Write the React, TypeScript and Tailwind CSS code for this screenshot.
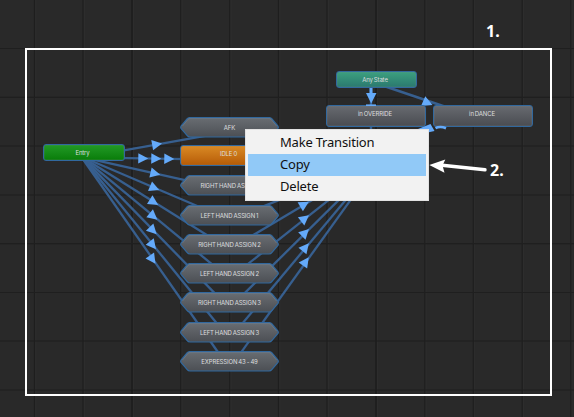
type Point = [number, number];

type GraphNode = {
  label: string;
  place: string;
  kind: 'entry' | 'any' | 'active' | 'state';
};

type Machine = { label: string; place: string; y: number };

const ENTRY: Point = [84, 153];
const EXIT: Point = [376, 157];
const HUB_X = 229.5;

const machines: Machine[] = [
  { label: 'AFK', place: 'top-[117px]', y: 127 },
  { label: 'RIGHT HAND ASSIGN', place: 'top-[175px]', y: 185.5 },
  { label: 'LEFT HAND ASSIGN 1', place: 'top-[205px]', y: 215 },
  { label: 'RIGHT HAND ASSIGN 2', place: 'top-[234px]', y: 244 },
  { label: 'LEFT HAND ASSIGN 2', place: 'top-[263px]', y: 273 },
  { label: 'RIGHT HAND ASSIGN 3', place: 'top-[292px]', y: 302 },
  { label: 'LEFT HAND ASSIGN 3', place: 'top-[322px]', y: 332 },
  { label: 'EXPRESSION 43 - 49', place: 'top-[351px]', y: 361 },
];

const states: GraphNode[] = [
  { label: 'Entry', place: 'left-[43px] top-[144px] w-[82px] h-[17px] pr-[3px]', kind: 'entry' },
  { label: 'IDLE 0', place: 'left-[180px] top-[145px] w-[99px] h-[21px] pr-[2px]', kind: 'active' },
  { label: 'Any State', place: 'left-[336px] top-[71px] w-[81px] h-[17px] pr-[3px]', kind: 'any' },
  { label: 'in OVERRIDE', place: 'left-[326px] top-[105px] w-[100px] h-[22px] pr-[2px]', kind: 'state' },
  { label: 'in DANCE', place: 'left-[433px] top-[105px] w-[100px] h-[22px] pr-[2px]', kind: 'state' },
];

const fills = {
  entry: 'from-[#219a25] to-[#087d08]',
  any: 'from-[#3ca07f] to-[#2b796f]',
  active: 'from-[#d98a24] to-[#b65b05]',
  state: 'from-[#676a70] to-[#4a4c51]',
};

const columns = [34.5, 83, 132, 180.7, 229.7, 278.5, 327, 376, 424.8, 473.3, 522.2, 570.8];
const rows = [48.5, 97.3, 146, 195, 243.7, 292.5, 341, 390];

/** A transition line, shifted sideways so opposite directions do not overlap. */
function Edge({ from, to, arrows = [0] }: { from: Point; to: Point; arrows?: number[] }) {
  const dx = to[0] - from[0];
  const dy = to[1] - from[1];
  const len = Math.hypot(dx, dy);
  const ox = (-dy / len) * 4.4;
  const oy = (dx / len) * 4.4;
  const angle = (Math.atan2(dy, dx) * 180) / Math.PI;
  const cx = (from[0] + to[0]) / 2 + ox - 0.6;
  const cy = (from[1] + to[1]) / 2 + oy;
  return (
    <g>
      <line
        x1={from[0] + ox}
        y1={from[1] + oy}
        x2={to[0] + ox}
        y2={to[1] + oy}
        stroke="#375f8f"
        strokeWidth="2.3"
      />
      {arrows.map((a) => (
        <path
          key={a}
          d="M-4.8 -5.2 L5.2 0 L-4.8 5.2 Z"
          fill="#64aafa"
          transform={`translate(${cx + (dx / len) * a} ${cy + (dy / len) * a}) rotate(${angle})`}
        />
      ))}
    </g>
  );
}

function Grid() {
  return (
    <g>
      {columns.map((x, i) => (
        <g key={x}>
          <line x1={x} y1="0" x2={x} y2="417" stroke="#1e1e1e" strokeWidth={i % 5 === 2 ? 1.8 : 1.1} />
          <line x1={x + 1.4} y1="0" x2={x + 1.4} y2="417" stroke="#2e2e2e" strokeWidth="1" />
        </g>
      ))}
      {rows.map((y) => (
        <line key={y} x1="0" y1={y} x2="574" y2={y} stroke="#1f1f1f" strokeWidth="1.2" />
      ))}
    </g>
  );
}

function Label({ text }: { text: string }) {
  return (
    <span className="relative whitespace-nowrap text-[6px] leading-[8px] tracking-[-0.14px] text-[#dcdddf] [word-spacing:-0.5px]">
      {text}
    </span>
  );
}

function MachineNode({ label, place }: Machine) {
  return (
    <div className={`absolute left-[180px] flex h-[21px] w-[99px] items-center justify-center ${place}`}>
      <svg className="absolute inset-0" width="99" height="21" viewBox="0 0 99 21">
        <path
          d="M9.5 .7H89.5Q91 .8 92 2L98 9.2Q98.7 10.3 98 11.4L92 18.4Q90.8 20 89 20H10Q8.2 20 7 18.4L1 11.4Q.3 10.3 1 9.2L7 2Q8 .8 9.5 .7Z"
          fill="url(#steel)"
          stroke="#31689e"
          strokeWidth="1.2"
        />
        <path d="M2.5 9L8 2.4Q8.6 1.7 10 1.6H89Q90.4 1.7 91 2.4L96.5 9" fill="none" stroke="#75808b" strokeWidth=".6" />
      </svg>
      <Label text={label} />
    </div>
  );
}

function StateNode({ label, place, kind }: GraphNode) {
  const big = kind === 'active' || kind === 'state';
  return (
    <div
      className={`absolute flex justify-center rounded-[3px] border border-[#31689e] bg-linear-to-b shadow-[inset_0_0_0_0.5px_#7c858e55] ${fills[kind]} ${place} ${big ? 'items-start pt-[3.5px]' : 'items-center'}`}
    >
      <Label text={label} />
    </div>
  );
}

function ContextMenu() {
  return (
    <div className="absolute left-[245px] top-[129px] flex h-[72px] w-[184px] flex-col border border-[#e2e2e2] bg-[#f2f2f2] px-[2px] pt-[2px] font-['Noto_Sans','Open_Sans',sans-serif] text-[13px] text-[#101010]">
      {['Make Transition', 'Copy', 'Delete'].map((item) => (
        <div
          key={item}
          className={`flex h-[22px] shrink-0 items-center pl-[32px] tracking-[-0.2px] ${item === 'Copy' ? 'bg-[#91c9f7]' : ''}`}
        >
          {item}
        </div>
      ))}
    </div>
  );
}

export default function App() {
  return (
    <main className="relative h-[417px] w-[574px] overflow-hidden bg-[#292929] font-[Inter,sans-serif]">
      <svg className="absolute inset-0" width="574" height="417" viewBox="0 0 574 417">
        <defs>
          <linearGradient id="steel" x1="0" y1="0" x2="0" y2="1">
            <stop offset="0" stopColor="#696d72" />
            <stop offset="1" stopColor="#4c4f54" />
          </linearGradient>
        </defs>
        <Grid />
        {machines.map((m, i) => (
          <g key={m.label}>
            <Edge from={ENTRY} to={[HUB_X, m.y]} />
            {i > 0 && <Edge from={[HUB_X, m.y]} to={EXIT} />}
          </g>
        ))}
        <Edge from={ENTRY} to={[HUB_X, 155.5]} arrows={[-13, 0, 13]} />
        <path d="M371 86V140M384 86L446 107" stroke="#375f8f" strokeWidth="2.4" />
        <path d="M371 88V93" stroke="#64aafa" strokeWidth="3" />
        <path d="M366 93H376.5L371.2 103.5ZM425.3 96.3L432.5 105L421 106Z" fill="#64aafa" />
      </svg>

      {machines.map((m) => (
        <MachineNode key={m.label} {...m} />
      ))}
      {states.map((s) => (
        <StateNode key={s.label} {...s} />
      ))}

      <svg className="absolute left-[360px] top-[100px]" width="100" height="40" viewBox="360 100 100 40">
        <path d="M366 105.2H376" stroke="#64aafa" strokeWidth="1.6" />
        <path d="M430.5 124L434.5 131L425.5 133L418 129Z" fill="#64aafa" />
        <path d="M435.5 128.2Q440 125.8 446 128.2" fill="none" stroke="#64aafa" strokeWidth="2.6" />
      </svg>

      <div className="absolute left-[25px] top-[48px] h-[348px] w-[527px] border-2 border-white" />
      <ContextMenu />

      <svg className="absolute left-[428px] top-[156px]" width="60" height="20" viewBox="0 0 60 20">
        <path d="M14 9.2L57 13.7" stroke="#fff" strokeWidth="3.4" strokeLinecap="round" />
        <path d="M1.3 9.1L17.3 3.5L14.5 9.5L16.5 16.7Z" fill="#fff" />
      </svg>
      <span className="absolute left-[486px] top-[21px] font-['Noto_Sans',sans-serif] text-[16px] font-bold leading-5 text-white">1.</span>
      <span className="absolute left-[490px] top-[160px] font-['Noto_Sans',sans-serif] text-[16px] font-bold leading-5 text-white">2.</span>
    </main>
  );
}
